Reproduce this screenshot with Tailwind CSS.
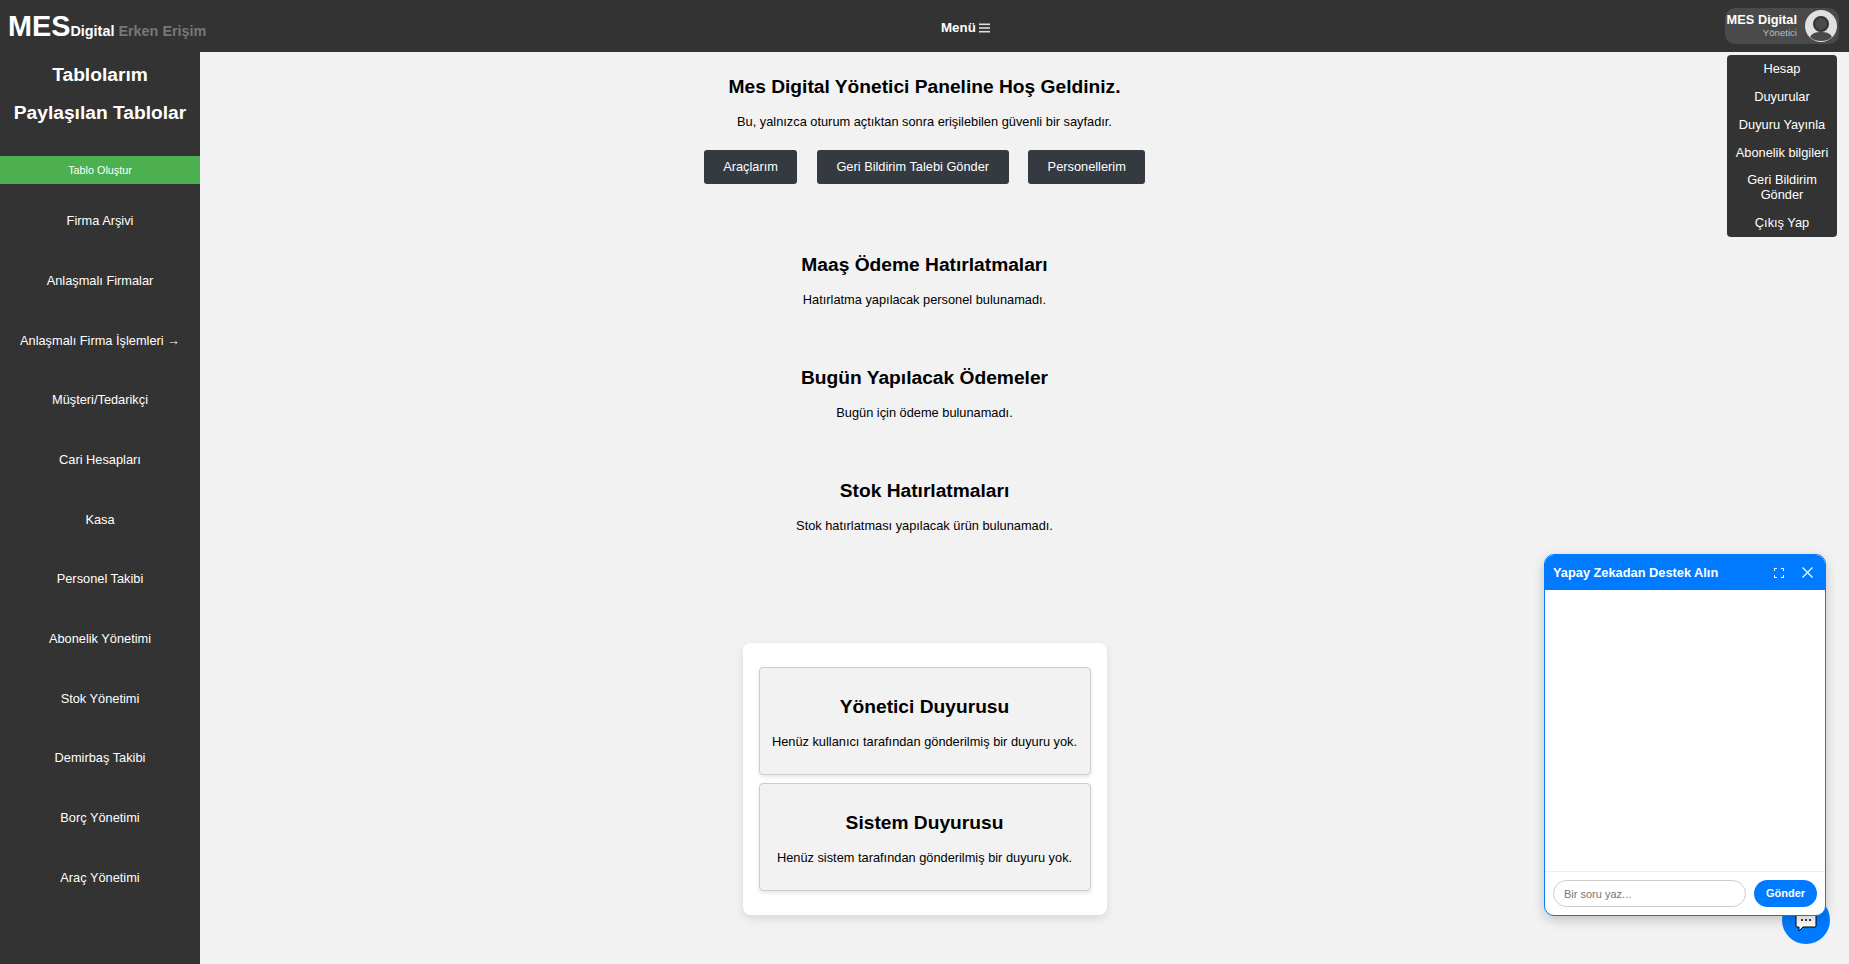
<!DOCTYPE html>
<html lang="tr">
<head>
    <meta charset="UTF-8">
    <title>Mes Digital - Yönetici Paneli</title>
    <script src="https://cdn.jsdelivr.net/npm/@tailwindcss/browser@4"></script>
</head>
<body class="h-[964px] overflow-hidden bg-[#f2f2f2] font-['Liberation_Sans',Arial,sans-serif] text-black">
    <!-- header -->
    <header class="relative flex h-[52px] items-center justify-between bg-[#333333] pl-2 pr-[10px] text-white">
        <div class="flex items-baseline pt-[2px] font-bold">
            <span class="text-[28.8px] leading-none">MES</span>
            <span class="text-[14.4px]">Digital</span>
            <span class="ml-1 text-[14.4px] text-[#777777]">Erken Erişim</span>
        </div>
        <div class="absolute left-[941px] top-0 flex h-[52px] items-center pt-[3px] text-[13.33px] font-bold">Menü
            <svg class="ml-[3px]" width="11" height="10" viewBox="0 0 11 10" fill="#dddddd"><rect y="0.5" width="11" height="1.6"/><rect y="4.2" width="11" height="1.6"/><rect y="7.9" width="11" height="1.6"/></svg>
        </div>
        <div class="flex h-9 w-[114px] items-center justify-end rounded-[10px] bg-[#4a4a4a] pr-[2px]">
            <div class="mr-2 whitespace-nowrap text-right leading-none">
                <div class="text-[12.8px] font-bold">MES Digital</div>
                <div class="mt-[1px] text-[9.6px] text-[#bbbbbb]">Yönetici</div>
            </div>
            <svg width="32" height="32" viewBox="0 0 32 32">
                <circle cx="16" cy="16" r="16" fill="#e0e0e0"/>
                <circle cx="16" cy="14" r="7" fill="#4a4a4a" stroke="#333333" stroke-width="2"/>
                <path d="M5 27c2-4 6-5 11-5s9 1 11 5c-3 3-7 4-11 4s-8-1-11-4z" fill="#4a4a4a"/>
            </svg>
        </div>
        <!-- user menu -->
        <div class="absolute left-[1727px] top-[55px] z-10 w-[110px] rounded-[4px] bg-[#333333] text-center text-[12.8px] leading-[15px]">
            <a class="mb-[1px] block px-1 py-[6px]">Hesap</a>
            <a class="mb-[1px] block px-1 py-[6px]">Duyurular</a>
            <a class="mb-[1px] block px-1 py-[6px]">Duyuru Yayınla</a>
            <a class="mb-[1px] block px-1 py-[6px]">Abonelik bilgileri</a>
            <a class="mb-[1px] block px-4 pb-[6px] pt-[5px]">Geri Bildirim Gönder</a>
            <a class="block px-1 pb-[7px] pt-[6px]">Çıkış Yap</a>
        </div>
    </header>

    <div class="flex h-[912px]">
        <!-- sidebar -->
        <aside class="w-[200px] shrink-0 bg-[#333333] text-center text-white">
            <div class="pt-[4px] text-[19.2px] font-bold leading-[38px]">
                <div>Tablolarım</div>
                <div>Paylaşılan Tablolar</div>
            </div>
            <div class="mt-[24px] h-7 bg-[#4caf50] text-[10.8px] leading-7">Tablo Oluştur</div>
            <nav class="pt-[7px] text-[12.8px]">
                <a class="flex h-[59.7px] items-center justify-center">Firma Arşivi</a>
                <a class="flex h-[59.7px] items-center justify-center">Anlaşmalı Firmalar</a>
                <a class="flex h-[59.7px] items-center justify-center">Anlaşmalı Firma İşlemleri →</a>
                <a class="flex h-[59.7px] items-center justify-center">Müşteri/Tedarikçi</a>
                <a class="flex h-[59.7px] items-center justify-center">Cari Hesapları</a>
                <a class="flex h-[59.7px] items-center justify-center">Kasa</a>
                <a class="flex h-[59.7px] items-center justify-center">Personel Takibi</a>
                <a class="flex h-[59.7px] items-center justify-center">Abonelik Yönetimi</a>
                <a class="flex h-[59.7px] items-center justify-center">Stok Yönetimi</a>
                <a class="flex h-[59.7px] items-center justify-center">Demirbaş Takibi</a>
                <a class="flex h-[59.7px] items-center justify-center">Borç Yönetimi</a>
                <a class="flex h-[59.7px] items-center justify-center">Araç Yönetimi</a>
            </nav>
        </aside>

        <!-- main -->
        <main class="flex-1 pr-[200px] text-center">
            <h2 class="pt-[23px] text-[19.2px] font-bold leading-[23px]">Mes Digital Yönetici Paneline Hoş Geldiniz.</h2>
            <p class="mt-4 text-[12.8px] leading-4">Bu, yalnızca oturum açtıktan sonra erişilebilen güvenli bir sayfadır.</p>
            <div class="mt-[20px] flex justify-center gap-[19.5px] text-[12.8px] text-white">
                <button class="h-[34px] rounded-[3px] bg-[#343a40] px-[19.5px]">Araçlarım</button>
                <button class="h-[34px] rounded-[3px] bg-[#343a40] px-[19.5px]">Geri Bildirim Talebi Gönder</button>
                <button class="h-[34px] rounded-[3px] bg-[#343a40] px-[19.5px]">Personellerim</button>
            </div>

            <h2 class="mt-[69px] text-[19.2px] font-bold leading-[23px]">Maaş Ödeme Hatırlatmaları</h2>
            <p class="mt-4 text-[12.8px] leading-4">Hatırlatma yapılacak personel bulunamadı.</p>
            <h2 class="mt-[58px] text-[19.2px] font-bold leading-[23px]">Bugün Yapılacak Ödemeler</h2>
            <p class="mt-4 text-[12.8px] leading-4">Bugün için ödeme bulunamadı.</p>
            <h2 class="mt-[58px] text-[19.2px] font-bold leading-[23px]">Stok Hatırlatmaları</h2>
            <p class="mt-4 text-[12.8px] leading-4">Stok hatırlatması yapılacak ürün bulunamadı.</p>

            <!-- announcements -->
            <section class="mx-auto mt-[109px] w-[364px] rounded-[8px] bg-white px-4 py-6 shadow-[0_4px_8px_rgba(0,0,0,0.1)]">
                <div class="h-[108px] rounded-[4px] border border-[#cccccc] bg-[#f2f2f2] pt-[27px] shadow-[0_2px_4px_rgba(0,0,0,0.1)]">
                    <h3 class="text-[19.2px] font-bold leading-[23px]">Yönetici Duyurusu</h3>
                    <p class="mt-4 text-[12.8px] leading-4">Henüz kullanıcı tarafından gönderilmiş bir duyuru yok.</p>
                </div>
                <div class="mt-2 h-[108px] rounded-[4px] border border-[#cccccc] bg-[#f2f2f2] pt-[27px] shadow-[0_2px_4px_rgba(0,0,0,0.1)]">
                    <h3 class="text-[19.2px] font-bold leading-[23px]">Sistem Duyurusu</h3>
                    <p class="mt-4 text-[12.8px] leading-4">Henüz sistem tarafından gönderilmiş bir duyuru yok.</p>
                </div>
            </section>
        </main>
    </div>

    <!-- chat toggle -->
    <div class="absolute left-[1782px] top-[896px] flex h-12 w-12 items-center justify-center rounded-full bg-[#007bff]">
        <svg class="mt-1" width="24" height="24" viewBox="0 0 24 24"><path d="M3 3h18a1 1 0 0 1 1 1v12a1 1 0 0 1-1 1H9l-4 4v-4H3a1 1 0 0 1-1-1V4a1 1 0 0 1 1-1z" fill="#fff" stroke="#000" stroke-width="1"/><circle cx="8" cy="10" r="1" fill="#000"/><circle cx="12" cy="10" r="1" fill="#000"/><circle cx="16" cy="10" r="1" fill="#000"/></svg>
    </div>

    <!-- chat window -->
    <div class="absolute left-[1544px] top-[554px] flex h-[362px] w-[282px] flex-col overflow-hidden rounded-[10px] border border-[#007bff] bg-white shadow-[0_4px_12px_rgba(0,0,0,0.2)]">
        <div class="flex h-[35px] shrink-0 items-center bg-[#007bff] pl-2 text-[12.8px] font-bold text-white">
            <span class="flex-1">Yapay Zekadan Destek Alın</span>
            <svg class="mr-[18px]" width="10" height="10" viewBox="0 0 10 10" fill="none" stroke="#fff" stroke-width="1"><path d="M.5 3V.5H3M7 .5h2.5V3M9.5 7v2.5H7M3 9.5H.5V7"/></svg>
            <svg class="mr-[12px]" width="11" height="11" viewBox="0 0 11 11" fill="none" stroke="#fff" stroke-width="1.2"><path d="M.5.5l10 10M10.5.5l-10 10"/></svg>
        </div>
        <div class="flex-1"></div>
        <div class="flex h-[44px] shrink-0 items-center gap-2 border-t border-[#eeeeee] pl-2 pr-2">
            <input class="h-[27px] w-[193px] rounded-full border border-[#cccccc] px-[10px] text-[11px] placeholder:text-[#777777]" placeholder="Bir soru yaz...">
            <button class="h-[27px] flex-1 rounded-full bg-[#007bff] text-[11px] font-bold text-white">Gönder</button>
        </div>
    </div>
</body>
</html>
